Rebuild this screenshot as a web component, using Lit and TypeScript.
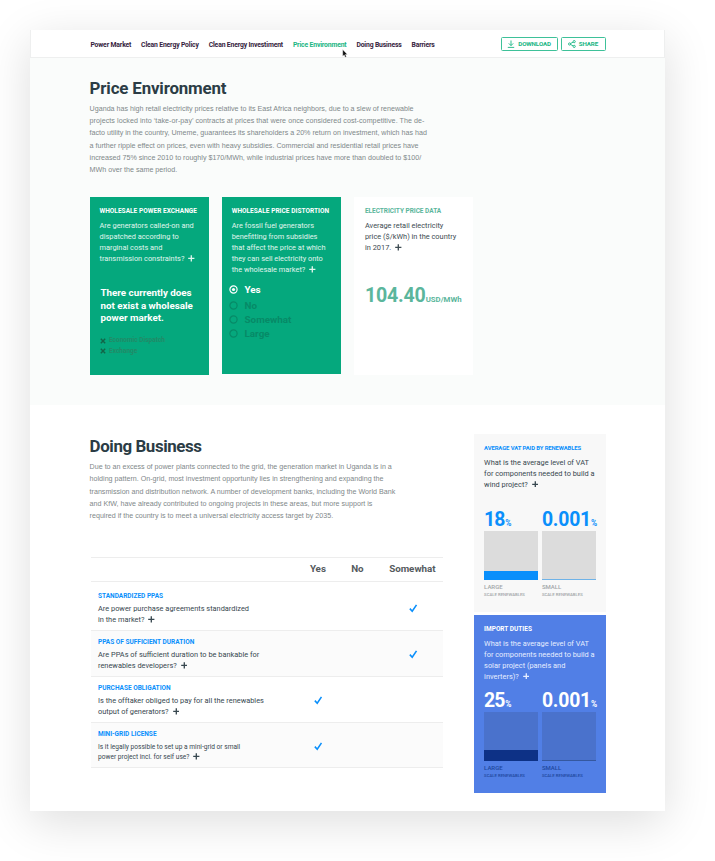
import { LitElement, html, css, svg, nothing } from "lit";
import { customElement, property } from "lit/decorators.js";

const lines = (text: string[], plus = false) =>
  text.map(
    (t, i) => html`<div class="line">${t}${plus && i === text.length - 1
      ? html`<svg class="plus" viewBox="0 0 7 7"><path d="M3.5 .2v6.6M.2 3.5h6.6" stroke="currentColor" stroke-width="1.4"/></svg>`
      : nothing}</div>`
  );

const shared = css`
  * { box-sizing: border-box; }
  .line { white-space: nowrap; }
  .plus { width: 6.6px; height: 6.6px; margin-left: 4px; vertical-align: -0.6px; display: inline-block; }
  .label { font-weight: 700; white-space: nowrap; font-size: 6.5px; line-height: 8px; }
  .question { font-size: 7.4px; line-height: 11px; }
`;

@customElement("duty-panel")
export class DutyPanel extends LitElement {
  @property() heading = "";
  @property({ attribute: false }) question: string[] = [];
  @property() large = "";
  @property({ type: Number }) fill = 0;

  static styles = [shared, css`
    :host { display: block; padding: 10px 0 0 10.5px; font-family: Roboto, sans-serif; color: #37474f; background: #f8f8f8;
      --accent: #0a8ffb; --box: #dcdcdc; --fill: #0a8ffb; --line: #6fb3e8; --caption: #a2a6a8; }
    :host([tone="blue"]) { background: #517fe6; color: #e6eeff; --accent: #fff; --box: #4a72cc; --fill: #0d3186; --line: #35589f; --caption: #1f489e; }
    .label { color: var(--accent); font-size: 5.9px; letter-spacing: -0.1px; }
    :host([tone="blue"]) .label { font-size: 6.5px; letter-spacing: 0; }
    .question { height: 44px; margin-top: 4.6px; }
    .charts { display: flex; gap: 4px; margin-top: 9.7px; }
    .chart { width: 53.8px; }
    .value { display: flex; align-items: baseline; height: 20px; line-height: 19px; font-size: 19.4px; letter-spacing: -0.2px; font-weight: 700; color: var(--accent); white-space: nowrap; }
    .value.tight { letter-spacing: -1px; }
    .unit { font-size: 8.4px; font-weight: 700; letter-spacing: 0; }
    .tight .unit { margin-left: 0.8px; }
    .box { height: 49px; margin-top: 0.7px; background: var(--box); display: flex; align-items: flex-end; }
    .fill { width: 100%; background: var(--fill); }
    .fill.line { background: var(--line); }
    .caption { color: var(--caption); font-size: 6px; line-height: 8px; font-weight: 500; margin-top: 3px; }
    .sub { color: var(--caption); font-size: 4.25px; line-height: 7px; font-weight: 500; white-space: nowrap; }
  `];

  render() {
    const chart = (value: string, height: number, name: string) => html`
      <div class="chart">
        <div class="value ${value.length < 3 ? "tight" : ""}">${value}<span class="unit">%</span></div>
        <div class="box"><div class="fill ${height <= 1 ? "line" : ""}" style="height:${height}px"></div></div>
        <div class="caption">${name}</div>
        <div class="sub">SCALE RENEWABLES</div>
      </div>`;
    return html`
      <div class="label">${this.heading}</div>
      <div class="question">${lines(this.question, true)}</div>
      <div class="charts">${chart(this.large, this.fill, "LARGE")}${chart("0.001", 1, "SMALL")}</div>`;
  }
}

@customElement("app-root")
export class AppRoot extends LitElement {
  static styles = [shared, css`
    :host { display: block; box-sizing: border-box; height: 861px; padding: 30px; background: #fff; overflow: hidden; font-family: Roboto, sans-serif; color: #37474f; }
    .frame { width: 635px; height: 781px; background: #fff; box-shadow: 0 11px 44px rgba(0, 0, 0, 0.135); }
    header { height: 27.5px; padding-left: 59.4px; display: flex; border: 1px solid #eeefef; border-top: 0; position: relative; background: #fff; }
    nav { display: flex; gap: 9.9px; width: 410.6px; font-size: 6.8px; letter-spacing: -0.15px; font-weight: 700; line-height: 31px; color: #341c3c; white-space: nowrap; }
    .active { color: #19b583; }
    .cursor { position: absolute; left: 311px; top: 19px; width: 6px; height: 9px; }
    .actions { display: flex; gap: 3.5px; padding-top: 6.5px; }
    .button { height: 14.5px; border: 1px solid #3ec199; border-radius: 1.5px; display: flex; align-items: center; color: #19b583; font-size: 6.2px; font-weight: 700; gap: 2.8px; padding-left: 5.5px; letter-spacing: -0.12px; }
    .download { width: 57px; }
    .share { width: 44.2px; }
    .button svg { width: 8px; height: 8px; fill: none; stroke: currentColor; stroke-width: 0.9; }
    .price { height: 347.5px; background: #fafcfb; padding: 20px 0 0 59.6px; }
    h1 { margin: 0; font-size: 16.9px; line-height: 20px; font-weight: 700; color: #2b3c45; letter-spacing: -0.16px; }
    .business h1 { letter-spacing: -0.4px; }
    .copy { font-family: "Liberation Sans", Arial, sans-serif; font-size: 7.14px; line-height: 12.35px; color: #7f888a; margin-top: 5.1px; }
    .price .copy .line:nth-child(2) { letter-spacing: 0.055px; }
    .cards { display: flex; align-items: flex-start; gap: 13px; margin-top: 20.8px; }
    .card { width: 119.2px; height: 177.5px; padding: 10px 0 0 9.9px; background: #05a87d; color: #e0f6ee; }
    .card.short { height: 176.3px; }
    .card.plain { background: #fff; color: #3d4b52; padding-left: 11px; }
    .card .label { color: #fff; line-height: 8.6px; letter-spacing: 0.04px; }
    .card.plain .label { color: #5bb69c; letter-spacing: -0.03px; }
    .card .question { margin-top: 4.4px; }
    .answer { margin: 23px 0 0 1px; font-size: 9.8px; line-height: 12.4px; font-weight: 700; color: #fff; }
    .crosses { margin: 10.8px 0 0 1px; font-size: 6.5px; line-height: 10.3px; color: #228a67; font-weight: 700; }
    .cross { display: flex; align-items: center; gap: 2.5px; }
    .cross svg { width: 6px; height: 6px; stroke: #126548; stroke-width: 1.4; }
    .options { margin: 6.3px 0 0 -2.2px; font-size: 9.9px; font-weight: 700; color: #078a67; }
    .option { display: flex; align-items: center; gap: 6px; height: 14px; }
    .option.on { color: #fff; height: 17px; padding-bottom: 1px; }
    .option svg { width: 9px; height: 9px; fill: none; stroke: currentColor; stroke-width: 1.2; }
    .amount { display: flex; align-items: baseline; margin-top: 32px; font-size: 19.6px; line-height: 22px; font-weight: 700; color: #5bb69c; letter-spacing: -0.2px; }
    .amount span { font-size: 7.8px; letter-spacing: 0; }
    .business { display: flex; padding: 29px 0 0 59.6px; }
    .main { width: 384px; padding-top: 2px; }
    .table { width: 352.4px; margin: 34.2px 0 0 1.3px; }
    .head, .row { display: grid; grid-template-columns: 207px 40px 39px 1fr; border-bottom: 1px solid #ededed; }
    .head > :last-child { padding-left: 4.5px; }
    .mark:last-child { padding-left: 6.5px; }
    .head { height: 25px; border-top: 1px solid #ededed; font-size: 9.8px; line-height: 22px; font-weight: 700; color: #555b5e; text-align: center; letter-spacing: -0.03px; }
    .row { height: 46px; padding-top: 6.4px; }
    .row.first { height: 49.3px; padding-top: 9.7px; }
    .row.small { height: 44.8px; }
    .row:nth-child(odd) { background: #fbfbfb; }
    .row .label { color: #0a8ffb; }
    .text { padding-left: 7.1px; }
    .row .question { margin-top: 3.4px; }
    .row.small .question { font-size: 6.6px; line-height: 10px; margin-top: 4.5px; }
    .mark { display: flex; justify-content: center; padding-top: 12.4px; }
    .mark svg { width: 8.6px; height: 8.6px; fill: none; stroke: #0a8ffb; stroke-width: 1.5; }
    aside { display: flex; flex-direction: column; gap: 3px; width: 132.6px; }
    duty-panel { height: 178px; }
  `];

  private card(label: string, text: string[], body: unknown, kind = "") {
    return html`<div class="card ${kind}">
      <div class="label">${label}</div>
      <div class="question">${lines(text, true)}</div>
      ${body}
    </div>`;
  }

  private row(label: string, text: string[], column: number, kind = "") {
    return html`<div class="row ${kind}">
      <div class="text"><div class="label">${label}</div><div class="question">${lines(text, true)}</div></div>
      ${[0, 1, 2].map((i) => html`<div class="mark">${i === column
        ? html`<svg viewBox="0 0 8 8"><path d="M.8 4.3 3 6.7 7 .8"/></svg>` : nothing}</div>`)}
    </div>`;
  }

  render() {
    const nav = ["Power Market", "Clean Energy Policy", "Clean Energy Investiment", "Price Environment", "Doing Business", "Barriers"];
    return html`<div class="frame">
      <header>
        <nav>${nav.map((n) => html`<span class=${n === "Price Environment" ? "active" : ""}>${n}</span>`)}</nav>
        <svg class="cursor" viewBox="0 0 6 9"><path d="M.7.6v6.7l1.5-1.4 1 2.4 1.2-.5-1-2.3h2z" fill="#111" stroke="#fff" stroke-width=".4"/></svg>
        <div class="actions">
          <div class="button download"><svg viewBox="0 0 8 8"><path d="M4 .5v5M1.8 3.4 4 5.6l2.2-2.2M.8 7.4h6.4"/></svg>DOWNLOAD</div>
          <div class="button share"><svg viewBox="0 0 8 8"><circle cx="1.6" cy="4" r="1.1"/><circle cx="6.2" cy="1.6" r="1.1"/><circle cx="6.2" cy="6.4" r="1.1"/><path d="m2.6 3.5 2.6-1.4M2.6 4.5l2.6 1.4"/></svg>SHARE</div>
        </div>
      </header>
      <section class="price">
        <h1>Price Environment</h1>
        <div class="copy">${lines([
          "Uganda has high retail electricity prices relative to its East Africa neighbors, due to a slew of renewable",
          "projects locked into ‘take-or-pay’ contracts at prices that were once considered cost-competitive. The de-",
          "facto utility in the country, Umeme, guarantees its shareholders a 20% return on investment, which has had",
          "a further ripple effect on prices, even with heavy subsidies. Commercial and residential retail prices have",
          "increased 75% since 2010 to roughly $170/MWh, while industrial prices have more than doubled to $100/",
          "MWh over the same period.",
        ])}</div>
        <div class="cards">
          ${this.card("WHOLESALE POWER EXCHANGE",
            ["Are generators called-on and", "dispatched according to", "marginal costs and", "transmission constraints?"],
            html`<div class="answer">${lines(["There currently does", "not exist a wholesale", "power market."])}</div>
              <div class="crosses">${["Economic Dispatch", "Exchange"].map((c) => html`<div class="cross"><svg viewBox="0 0 6 6"><path d="m.8.8 4.4 4.4m0-4.4L.8 5.2"/></svg>${c}</div>`)}</div>`)}
          ${this.card("WHOLESALE PRICE DISTORTION",
            ["Are fossil fuel generators", "benefitting from subsidies", "that affect the price at which", "they can sell electricity onto", "the wholesale market?"],
            html`<div class="options">${["Yes", "No", "Somewhat", "Large"].map((o, i) => html`<div class="option ${i ? "" : "on"}">
              <svg viewBox="0 0 9 9"><circle cx="4.5" cy="4.5" r="3.6"/>${i ? nothing : svg`<circle cx="4.5" cy="4.5" r="1.6" fill="currentColor" stroke="none"/>`}</svg>${o}</div>`)}</div>`, "short")}
          ${this.card("ELECTRICITY PRICE DATA",
            ["Average retail electricity", "price ($/kWh) in the country", "in 2017."],
            html`<div class="amount">104.40<span>USD/MWh</span></div>`, "plain")}
        </div>
      </section>
      <section class="business">
        <div class="main">
          <h1>Doing Business</h1>
          <div class="copy">${lines([
            "Due to an excess of power plants connected to the grid, the generation market in Uganda is in a",
            "holding pattern. On-grid, most investment opportunity lies in strengthening and expanding the",
            "transmission and distribution network. A number of development banks, including the World Bank",
            "and KfW, have already contributed to ongoing projects in these areas, but more support is",
            "required if the country is to meet a universal electricity access target by 2035.",
          ])}</div>
          <div class="table">
            <div class="head"><span></span><span>Yes</span><span>No</span><span>Somewhat</span></div>
            ${this.row("STANDARDIZED PPAS", ["Are power purchase agreements standardized", "in the market?"], 2, "first")}
            ${this.row("PPAS OF SUFFICIENT DURATION", ["Are PPAs of sufficient duration to be bankable for", "renewables developers?"], 2)}
            ${this.row("PURCHASE OBLIGATION", ["Is the offtaker obliged to pay for all the renewables", "output of generators?"], 0)}
            ${this.row("MINI-GRID LICENSE", ["Is it legally possible to set up a mini-grid or small", "power project incl. for self use?"], 0, "small")}
          </div>
        </div>
        <aside>
          <duty-panel heading="AVERAGE VAT PAID BY RENEWABLES" large="18" fill="8.5"
            .question=${["What is the average level of VAT", "for components needed to build a", "wind project?"]}></duty-panel>
          <duty-panel tone="blue" heading="IMPORT DUTIES" large="25" fill="11"
            .question=${["What is the average level of VAT", "for components needed to build a", "solar project (panels and", "inverters)?"]}></duty-panel>
        </aside>
      </section>
    </div>`;
  }
}
